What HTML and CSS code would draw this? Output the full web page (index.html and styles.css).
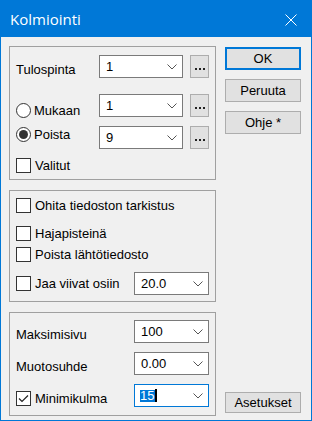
FILE: index.html
```html
<!DOCTYPE html>
<html lang="fi">
  <head>
    <meta charset="UTF-8" />
    <title>Kolmiointi</title>
    <link rel="stylesheet" href="styles.css">
  </head>
  <body>
    <div class="window">
      <header class="titlebar">
        <span class="title">Kolmiointi</span>
        <svg class="close" width="12" height="12" viewBox="0 0 12 12">
          <path d="M0.5 0.5L11.5 11.5M11.5 0.5L0.5 11.5" stroke="#fff" stroke-width="1" />
        </svg>
      </header>

      <div class="client">
        <div class="left">
          <!-- surface selection -->
          <div class="group group-surface">
            <div class="row">
              <div class="lead"><span class="label">Tulospinta</span></div>
              <div class="combo"><span>1</span><svg class="chevron" width="10" height="6" viewBox="0 0 10 6"><path d="M0.5 0.5L5 5L9.5 0.5" fill="none" stroke="#555" /></svg></div>
              <button class="more"><svg width="11" height="3" viewBox="0 0 11 3"><rect x="0" y="0" width="2" height="2" fill="#222" /><rect x="4" y="0" width="2" height="2" fill="#222" /><rect x="8" y="0" width="2" height="2" fill="#222" /></svg></button>
            </div>
            <div class="row row-mukaan">
              <div class="lead"><label class="option"><span class="radio"></span>Mukaan</label></div>
              <div class="combo"><span>1</span><svg class="chevron" width="10" height="6" viewBox="0 0 10 6"><path d="M0.5 0.5L5 5L9.5 0.5" fill="none" stroke="#555" /></svg></div>
              <button class="more"><svg width="11" height="3" viewBox="0 0 11 3"><rect x="0" y="0" width="2" height="2" fill="#222" /><rect x="4" y="0" width="2" height="2" fill="#222" /><rect x="8" y="0" width="2" height="2" fill="#222" /></svg></button>
            </div>
            <div class="row row-poista">
              <div class="lead"><label class="option option-top"><span class="radio checked"></span>Poista</label></div>
              <div class="combo"><span>9</span><svg class="chevron" width="10" height="6" viewBox="0 0 10 6"><path d="M0.5 0.5L5 5L9.5 0.5" fill="none" stroke="#555" /></svg></div>
              <button class="more"><svg width="11" height="3" viewBox="0 0 11 3"><rect x="0" y="0" width="2" height="2" fill="#222" /><rect x="4" y="0" width="2" height="2" fill="#222" /><rect x="8" y="0" width="2" height="2" fill="#222" /></svg></button>
            </div>
            <label class="check row-valitut"><span class="box"></span>Valitut</label>
          </div>

          <!-- options -->
          <div class="group group-options">
            <label class="check"><span class="box"></span>Ohita tiedoston tarkistus</label>
            <label class="check row-haja"><span class="box"></span>Hajapisteinä</label>
            <label class="check row-lahto"><span class="box"></span>Poista lähtötiedosto</label>
            <div class="row row-jaa">
              <div class="lead lead-wide"><label class="check"><span class="box"></span>Jaa viivat osiin</label></div>
              <div class="combo combo-small"><span>20.0</span><svg class="chevron" width="10" height="6" viewBox="0 0 10 6"><path d="M0.5 0.5L5 5L9.5 0.5" fill="none" stroke="#555" /></svg></div>
            </div>
          </div>

          <!-- limits -->
          <div class="group group-limits">
            <div class="row">
              <div class="lead lead-wide"><span class="label">Maksimisivu</span></div>
              <div class="combo combo-small"><span>100</span><svg class="chevron" width="10" height="6" viewBox="0 0 10 6"><path d="M0.5 0.5L5 5L9.5 0.5" fill="none" stroke="#555" /></svg></div>
            </div>
            <div class="row row-limit">
              <div class="lead lead-wide"><span class="label">Muotosuhde</span></div>
              <div class="combo combo-small"><span>0.00</span><svg class="chevron" width="10" height="6" viewBox="0 0 10 6"><path d="M0.5 0.5L5 5L9.5 0.5" fill="none" stroke="#555" /></svg></div>
            </div>
            <div class="row row-limit">
              <div class="lead lead-wide"><label class="check check-low"><span class="box"><svg width="13" height="13" viewBox="0 0 13 13"><path d="M2 6.5L5 9.5L11 3.5" fill="none" stroke="#222" stroke-width="1.2" /></svg></span>Minimikulma</label></div>
              <div class="combo combo-small combo-focus"><span class="entry"><span class="selected">15</span><span class="caret"></span></span><svg class="chevron" width="10" height="6" viewBox="0 0 10 6"><path d="M0.5 0.5L5 5L9.5 0.5" fill="none" stroke="#555" /></svg></div>
            </div>
          </div>
        </div>

        <div class="right">
          <button class="btn btn-default">OK</button>
          <button class="btn">Peruuta</button>
          <button class="btn">Ohje *</button>
          <button class="btn btn-settings">Asetukset</button>
        </div>
      </div>
    </div>
  </body>
</html>
```

FILE: styles.css
```css
:root {
  --accent: #0078d7;
  --face: #f0f0f0;
  --button: #e1e1e1;
  --button-border: #adadad;
  --field-border: #7a7a7a;
  --group-border: #a0a0a0;
}

* {
  margin: 0;
  padding: 0;
  box-sizing: border-box;
}

body {
  font-family: "Liberation Sans", Arial, sans-serif;
  font-size: 13px;
  line-height: 15px;
  color: #000;
  background: #fff;
}

.window {
  width: 312px;
  height: 421px;
  display: flex;
  flex-direction: column;
  background: var(--face);
}

.titlebar {
  height: 37px;
  flex-shrink: 0;
  background: var(--accent);
  display: flex;
  align-items: center;
  justify-content: space-between;
  padding: 0 15px 0 10px;
}

.title {
  font-family: "Open Sans", sans-serif;
  font-size: 15px;
  color: #fff;
  margin-top: 1px;
}

.close {
  margin-top: 3px;
}

.client {
  flex: 1;
  display: flex;
  gap: 9px;
  padding: 9px 10px 4px 8px;
  border: 1px solid var(--accent);
  border-top: 0;
}

.left {
  width: 207px;
  display: flex;
  flex-direction: column;
  gap: 10px;
}

.group {
  border: 1px solid var(--group-border);
  padding: 0 6px;
}

.group-surface {
  height: 134px;
  padding-top: 8px;
}

.group-options {
  height: 112px;
  padding-top: 7px;
}

.group-limits {
  height: 104px;
  padding-top: 7px;
}

.row {
  display: flex;
  align-items: flex-start;
  height: 23px;
}

.row-mukaan {
  margin-top: 16px;
}

.row-poista,
.row-valitut,
.row-limit {
  margin-top: 9px;
}

.row-haja {
  margin-top: 13px;
}

.row-lahto {
  margin-top: 6px;
}

.row-jaa {
  margin-top: 10px;
  align-items: center;
}

.lead {
  width: 83px;
  flex-shrink: 0;
}

.lead-wide {
  width: 118px;
}

.label {
  display: block;
  margin-top: 7px;
}

.option {
  display: flex;
  align-items: center;
  gap: 3px;
  margin-top: 9px;
}

.option-top {
  margin-top: 1px;
}

.radio {
  width: 15px;
  height: 15px;
  border: 1px solid #333;
  border-radius: 50%;
  background: #fff;
  display: flex;
  align-items: center;
  justify-content: center;
}

.radio.checked::after {
  content: "";
  width: 9px;
  height: 9px;
  border-radius: 50%;
  background: #333;
}

.check {
  display: flex;
  align-items: center;
  gap: 4px;
  height: 15px;
}

.check-low {
  margin-top: 7px;
}

.box {
  width: 15px;
  height: 15px;
  border: 1px solid #333;
  background: #fff;
  display: flex;
  align-items: center;
  justify-content: center;
}

.combo {
  width: 85px;
  height: 23px;
  border: 1px solid var(--field-border);
  background: #fff;
  display: flex;
  align-items: center;
  justify-content: space-between;
  padding: 0 5px 0 6px;
}

.combo-small {
  width: 77px;
}

.combo-focus {
  border-color: var(--accent);
  padding-left: 5px;
}

.entry {
  display: flex;
  align-items: center;
}

.selected {
  background: var(--accent);
  color: #fff;
  line-height: 12px;
  padding-right: 1px;
}

.caret {
  width: 2px;
  height: 13px;
  background: #000;
}

.more {
  width: 19px;
  height: 23px;
  margin-left: 7px;
  background: var(--button);
  border: 1px solid var(--button-border);
  display: flex;
  align-items: flex-end;
  justify-content: center;
  padding-bottom: 6px;
  padding-left: 2px;
}

.right {
  width: 76px;
  display: flex;
  flex-direction: column;
  gap: 9px;
  padding-top: 1px;
}

.btn {
  height: 23px;
  background: var(--button);
  border: 1px solid var(--button-border);
  font-family: inherit;
  font-size: 13px;
  color: #000;
}

.btn-default {
  border: 2px solid var(--accent);
}

.btn-settings {
  margin-top: auto;
  margin-bottom: 3px;
  height: 21px;
}
```
